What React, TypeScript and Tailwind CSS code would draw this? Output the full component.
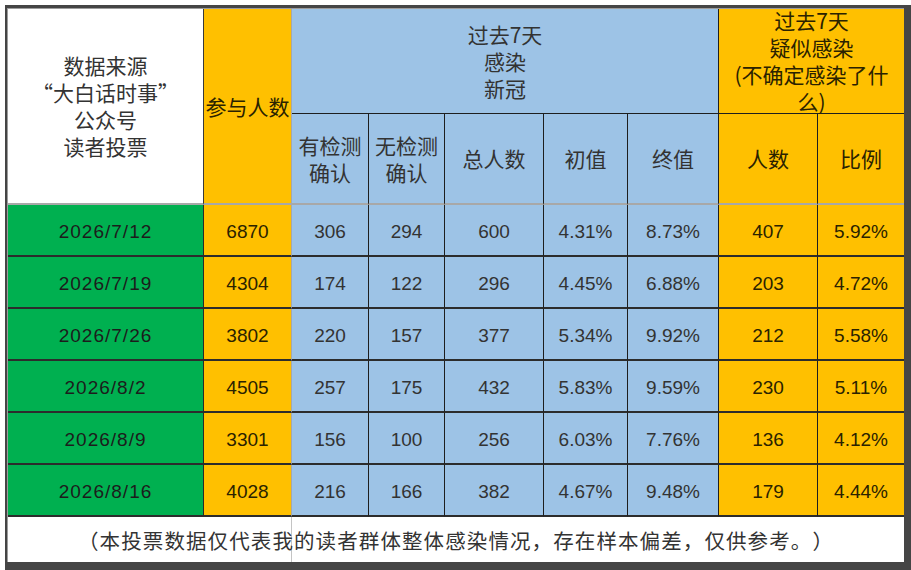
import React from "react";

const cjk = "font-['Noto_Sans_CJK_SC','Noto_Sans',sans-serif]";
const num = "font-['Liberation_Sans','Arial',sans-serif]";

const rows = [
  ["2026/7/12", "6870", "306", "294", "600", "4.31%", "8.73%", "407", "5.92%"],
  ["2026/7/19", "4304", "174", "122", "296", "4.45%", "6.88%", "203", "4.72%"],
  ["2026/7/26", "3802", "220", "157", "377", "5.34%", "9.92%", "212", "5.58%"],
  ["2026/8/2", "4505", "257", "175", "432", "5.83%", "9.59%", "230", "5.11%"],
  ["2026/8/9", "3301", "156", "100", "256", "6.03%", "7.76%", "136", "4.12%"],
  ["2026/8/16", "4028", "216", "166", "382", "4.67%", "9.48%", "179", "4.44%"],
];

function DataRow({ r }: { r: string[] }) {
  const base = `flex items-center justify-center pt-[5px] ${num} text-[19px] border-b-2 border-b-[#2c2c2c]`;
  return (
    <>
      <div className={`${base} bg-[#00b050] text-[#1c1c1c] tracking-[1px] border-r border-r-[#2a2a2a]`}>{r[0]}</div>
      <div className={`${base} bg-[#ffc000] text-[#2a2200] border-r border-r-[#a8a8a8]`}>{r[1]}</div>
      <div className={`${base} bg-[#9dc3e6] text-[#333] border-r border-r-[#1e1e1e]`}>{r[2]}</div>
      <div className={`${base} bg-[#9dc3e6] text-[#333] border-r border-r-[#1e1e1e]`}>{r[3]}</div>
      <div className={`${base} bg-[#9dc3e6] text-[#333] border-r border-r-[#1e1e1e]`}>{r[4]}</div>
      <div className={`${base} bg-[#9dc3e6] text-[#333] border-r border-r-[#1e1e1e]`}>{r[5]}</div>
      <div className={`${base} bg-[#9dc3e6] text-[#333] border-r border-r-[#1e1e1e]`}>{r[6]}</div>
      <div className={`${base} bg-[#ffc000] text-[#2a2200] border-r border-r-[#1e1e1e]`}>{r[7]}</div>
      <div className={`${base} bg-[#ffc000] text-[#2a2200]`}>{r[8]}</div>
    </>
  );
}

export default function App() {
  const h2 = `flex items-center justify-center text-center ${cjk} text-[21px] leading-[27px] border-b-2 border-b-[#a8a8a8]`;
  return (
    <div className="w-[911px] h-[570px] bg-white pl-[5px] pt-[5px] overflow-hidden">
      <div className="w-[906px] h-[565px] bg-[#454545] pt-[3px] pl-[2px] pr-[7px] pb-[8px]">
        <div className="border-t border-l border-[#9c9c9c] w-[897px] h-[554px]">
          <div className="grid grid-cols-[196px_88px_77px_76px_99px_84px_91px_99px_86px] grid-rows-[105px_91px_repeat(6,52px)_45px] w-[896px] h-[553px]">
            <div className={`row-span-2 bg-white text-[#333] border-r border-r-[#3a3a3a] ${h2}`}>
              <div>
                数据来源
                <br />
                “大白话时事”
                <br />
                公众号
                <br />
                读者投票
              </div>
            </div>
            <div className={`row-span-2 bg-[#ffc000] text-[#2a2200] border-r border-r-[#a8a8a8] whitespace-nowrap overflow-visible ${h2}`}>
              参与人数
            </div>
            <div className={`col-span-5 bg-[#9dc3e6] text-[#333] flex items-center justify-center text-center ${cjk} text-[21px] leading-[27px] border-b border-b-[#1e1e1e] border-r border-r-[#1e1e1e]`}>
              <div>
                过去7天
                <br />
                感染
                <br />
                新冠
              </div>
            </div>
            <div className={`col-span-2 bg-[#ffc000] text-[#2a2200] flex items-center justify-center text-center ${cjk} text-[21px] leading-[27px] border-b border-b-[#1e1e1e] overflow-visible`}>
              <div className="whitespace-nowrap">
                过去7天
                <br />
                疑似感染
                <br />
                (不确定感染了什
                <br />
                么)
              </div>
            </div>
            <div className={`bg-[#9dc3e6] text-[#333] border-r border-r-[#1e1e1e] ${h2}`}>
              <div>
                有检测
                <br />
                确认
              </div>
            </div>
            <div className={`bg-[#9dc3e6] text-[#333] border-r border-r-[#1e1e1e] ${h2}`}>
              <div>
                无检测
                <br />
                确认
              </div>
            </div>
            <div className={`bg-[#9dc3e6] text-[#333] border-r border-r-[#1e1e1e] ${h2}`}>总人数</div>
            <div className={`bg-[#9dc3e6] text-[#333] border-r border-r-[#1e1e1e] ${h2}`}>初值</div>
            <div className={`bg-[#9dc3e6] text-[#333] border-r border-r-[#1e1e1e] ${h2}`}>终值</div>
            <div className={`bg-[#ffc000] text-[#2a2200] border-r border-r-[#1e1e1e] ${h2}`}>人数</div>
            <div className={`bg-[#ffc000] text-[#2a2200] ${h2}`}>比例</div>
            {rows.map((r) => (
              <DataRow key={r[0]} r={r} />
            ))}
            <div
              className={`col-span-9 flex items-center justify-center pt-[2px] bg-white bg-[linear-gradient(to_right,transparent_283px,#c4c4c4_283px,#c4c4c4_284px,transparent_284px)] text-[#333] ${cjk} text-[20.5px] tracking-[1.1px] [text-spacing-trim:space-all] whitespace-nowrap`}
            >
              （本投票数据仅代表我的读者群体整体感染情况，存在样本偏差，仅供参考。）
            </div>
          </div>
        </div>
      </div>
    </div>
  );
}
